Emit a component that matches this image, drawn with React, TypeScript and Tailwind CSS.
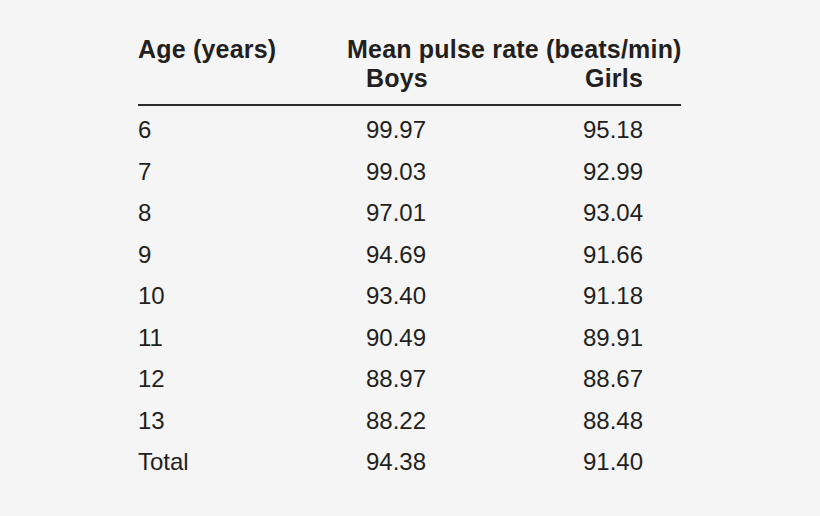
const rows = [
  { age: '6', boys: '99.97', girls: '95.18' },
  { age: '7', boys: '99.03', girls: '92.99' },
  { age: '8', boys: '97.01', girls: '93.04' },
  { age: '9', boys: '94.69', girls: '91.66' },
  { age: '10', boys: '93.40', girls: '91.18' },
  { age: '11', boys: '90.49', girls: '89.91' },
  { age: '12', boys: '88.97', girls: '88.67' },
  { age: '13', boys: '88.22', girls: '88.48' },
  { age: 'Total', boys: '94.38', girls: '91.40' },
];

export default function App() {
  return (
    <div className="w-[820px] h-[516px] bg-[#f5f5f5] text-[#231f20] font-['Liberation_Sans',Arial,sans-serif] pt-[35px] pl-[138px] overflow-hidden">
      <div className="w-[543px]">
        {/* header */}
        <div className="border-b-2 border-[#2b2b2b] pb-[10px] text-[25px] leading-[29.4px] font-bold tracking-[0.2px] whitespace-nowrap">
          <div className="flex">
            <div className="w-[209px] shrink-0">Age (years)</div>
            <div>Mean pulse rate (beats/min)</div>
          </div>
          <div className="flex justify-between pl-[228px] pr-[38px]">
            <div>Boys</div>
            <div>Girls</div>
          </div>
        </div>

        {/* body */}
        <div className="mt-[3.5px] text-[24px] leading-[41.5px]">
          {rows.map((r) => (
            <div key={r.age} className="grid grid-cols-[228px_1fr_auto] pr-[38px]">
              <div>{r.age}</div>
              <div>{r.boys}</div>
              <div>{r.girls}</div>
            </div>
          ))}
        </div>
      </div>
    </div>
  );
}
